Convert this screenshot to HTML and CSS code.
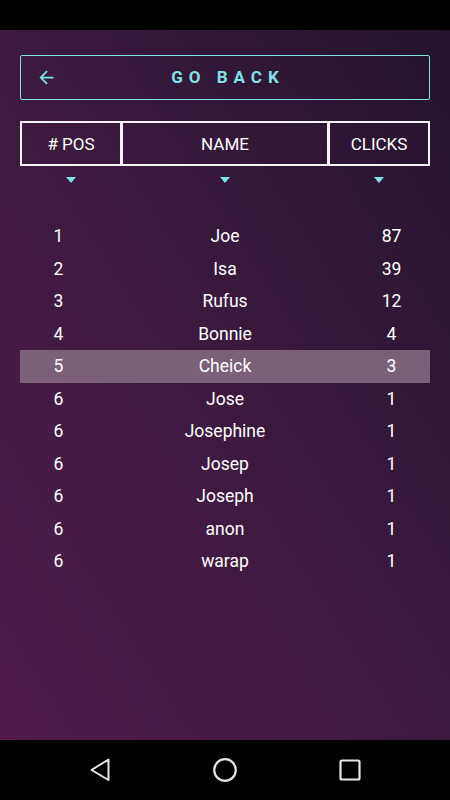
FILE: index.html
```html
<!DOCTYPE html>
<html>
<head>
<meta charset="utf-8">
<link rel="stylesheet" href="styles.css">
</head>
<body>
<div class="status"></div>
<main class="screen">
  <button class="back">
    <svg class="back-icon" viewBox="0 0 24 24" width="21" height="21"><path d="M20 11H7.83l5.59-5.59L12 4l-8 8 8 8 1.41-1.41L7.83 13H20v-2z" fill="#7fe3e6"/></svg>
    <span class="back-label">GO BACK</span>
  </button>
  <div class="head">
    <div class="hcell">#&nbsp;POS</div>
    <div class="hcell mid">NAME</div>
    <div class="hcell">CLICKS</div>
  </div>
  <div class="sorts">
    <span class="tri"></span><span class="tri"></span><span class="tri"></span>
  </div>
  <div class="rows">
    <div class="row"><span>1</span><span>Joe</span><span>87</span></div>
    <div class="row"><span>2</span><span>Isa</span><span>39</span></div>
    <div class="row"><span>3</span><span>Rufus</span><span>12</span></div>
    <div class="row"><span>4</span><span>Bonnie</span><span>4</span></div>
    <div class="row sel"><span>5</span><span>Cheick</span><span>3</span></div>
    <div class="row"><span>6</span><span>Jose</span><span>1</span></div>
    <div class="row"><span>6</span><span>Josephine</span><span>1</span></div>
    <div class="row"><span>6</span><span>Josep</span><span>1</span></div>
    <div class="row"><span>6</span><span>Joseph</span><span>1</span></div>
    <div class="row"><span>6</span><span>anon</span><span>1</span></div>
    <div class="row"><span>6</span><span>warap</span><span>1</span></div>
  </div>
</main>
<nav class="nav">
  <span class="nav-btn"><svg width="24" height="24" viewBox="0 0 24 24"><path d="M20.5 1.5 L20.5 22 L3.5 12 Z" fill="none" stroke="#e6e6e6" stroke-width="2" stroke-linejoin="round"/></svg></span>
  <span class="nav-btn"><svg width="26" height="26" viewBox="0 0 26 26"><circle cx="13" cy="13" r="10.8" fill="none" stroke="#e6e6e6" stroke-width="2.2"/></svg></span>
  <span class="nav-btn"><svg width="24" height="24" viewBox="0 0 24 24"><rect x="2.5" y="2.5" width="19" height="19" rx="1.5" fill="none" stroke="#e6e6e6" stroke-width="2.2"/></svg></span>
</nav>
</body>
</html>
```

FILE: styles.css
```css
* { box-sizing: border-box; }
html, body { margin: 0; padding: 0; }
body {
  width: 450px;
  height: 800px;
  background: #000;
  font-family: Roboto, "Liberation Sans", sans-serif;
  display: flex;
  flex-direction: column;
}
.status { height: 30px; background: #000; flex: none; }
.screen {
  height: 710px;
  flex: none;
  background: linear-gradient(to top right, #521b4a 0%, #3b1a3e 50%, #24142d 100%);
  padding: 25px 20px 0 20px;
  display: flex;
  flex-direction: column;
}
.back {
  height: 45px;
  border: 1.5px solid #7fe3e6;
  border-radius: 2px;
  background: transparent;
  display: flex;
  align-items: center;
  padding: 0 0 1px 15px;
  font-family: inherit;
  cursor: pointer;
}
.back-icon { flex: none; }
.back-label {
  flex: 1;
  text-align: center;
  color: #7fe3e6;
  font-weight: 700;
  font-size: 17px;
  letter-spacing: 6px;
  margin-left: -36px;
  padding-left: 6px;
}
.head {
  margin-top: 21px;
  display: grid;
  grid-template-columns: 102px 1fr 102px;
  height: 45px;
}
.hcell {
  border: 2px solid #f4f4f4;
  color: #fff;
  font-size: 17px;
  display: flex;
  align-items: center;
  justify-content: center;
}
.hcell.mid { border-left-width: 1px; border-right-width: 1px; }
.sorts {
  display: grid;
  grid-template-columns: 102px 1fr 102px;
  margin-top: 11px;
  justify-items: center;
}
.tri {
  width: 0; height: 0;
  border-left: 5.5px solid transparent;
  border-right: 5.5px solid transparent;
  border-top: 6px solid #7fe3e6;
}
.rows { margin-top: 37px; display: flex; flex-direction: column; }
.row {
  height: 32.5px;
  display: grid;
  grid-template-columns: 77px 1fr 77px;
  align-items: center;
  color: #fff;
  font-size: 17.5px;
  text-align: center;
}
.row.sel { background: #7a6178; }
.nav {
  height: 60px;
  flex: none;
  background: #000;
  display: flex;
  align-items: center;
  gap: 85px;
  padding-left: 80px;
}
.nav-btn {
  width: 40px;
  display: flex;
  justify-content: center;
}
```
